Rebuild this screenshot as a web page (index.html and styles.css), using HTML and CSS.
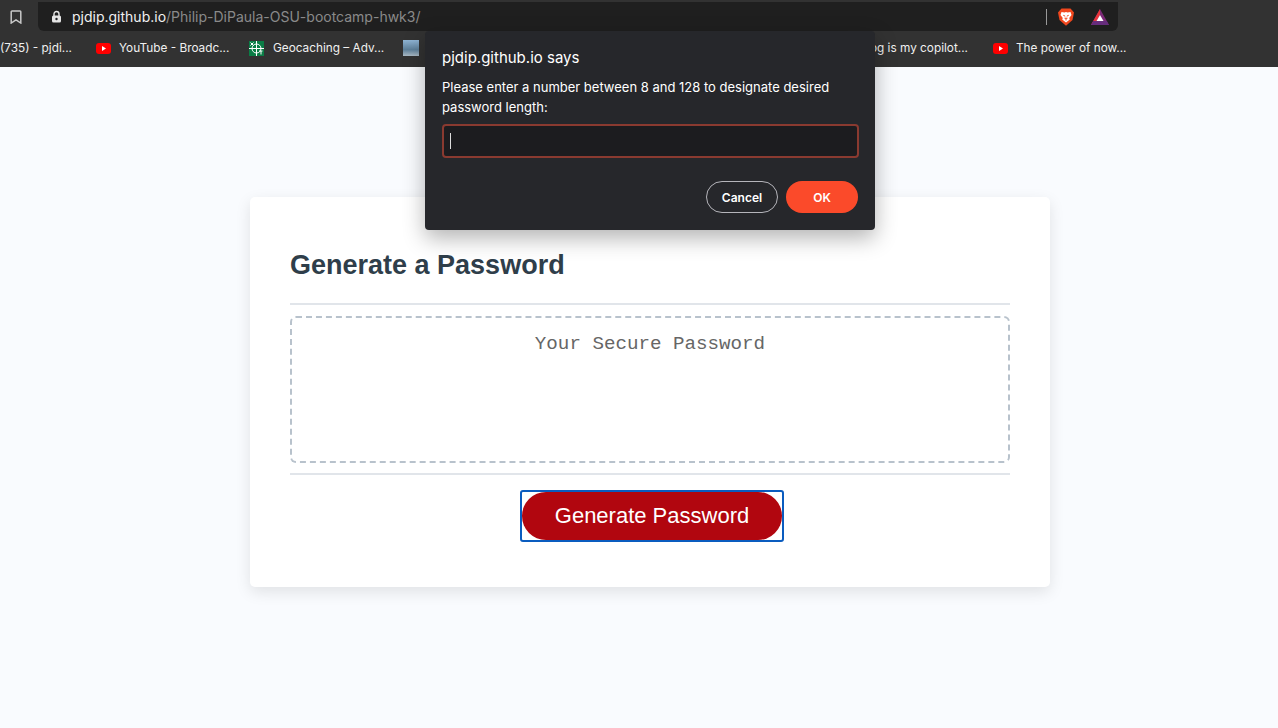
FILE: index.html
```html
<!DOCTYPE html>
<html lang="en">
<head>
  <meta charset="UTF-8" />
  <title>Password Generator</title>
  <link rel="stylesheet" href="styles.css">
</head>
<body>

  <header class="browser">
    <div class="toolbar">
      <svg class="bookmark-icon" width="12" height="14" viewBox="0 0 12 14"><path d="M2 1h8a.8.8 0 0 1 .8.8V13L6 9.800 1.200 13V1.800A.8.8 0 0 1 2 1z" fill="none" stroke="#c9c9c9" stroke-width="1.500"/></svg>
      <div class="address">
        <svg class="lock-icon" width="11" height="13" viewBox="0 0 11 13"><path d="M3 6V4a2.500 2.500 0 0 1 5 0v2" fill="none" stroke="#e4e4e4" stroke-width="1.400"/><rect x="1" y="5.500" width="9" height="7" rx="1.500" fill="#e4e4e4"/><circle cx="5.500" cy="9" r="1.200" fill="#202124"/></svg>
        <span class="host">pjdip.github.io</span><span class="path">/Philip-DiPaula-OSU-bootcamp-hwk3/</span>
        <div class="address-end">
          <span class="divider"></span>
          <svg width="16" height="18" viewBox="0 0 16 18"><path d="M3.500 .5h9l2 2.200L16 4.500l-1.500 7.500L8 17.800 1.500 12 0 4.500l1.500-1.800z" fill="#f1471d"/><path d="M3.500 4l3 .5L8 4l1.500.5 3-.5 1 3-2.300 3 .6 1.500L8 14.500l-3.800-3 .6-1.500-2.300-3z" fill="#fff"/><path d="M5.300 7.300l1.900.9M10.700 7.300l-1.900.9M8 10v2.500M6.500 10.200h3" stroke="#f1471d" stroke-width="1"/></svg>
          <svg width="18" height="16" viewBox="0 0 18 16"><polygon points="9,0 18,16 0,16" fill="#7c2a78"/><polygon points="9,0 4.500,8 0,16 5.500,12 9,6" fill="#e8343a"/><polygon points="9,6 12.500,12 5.500,12" fill="#fff"/><polygon points="0,16 18,16 15.800,12 2.200,12" fill="#662d7c"/></svg>
        </div>
      </div>
    </div>
    <nav class="bookmarks">
      <a class="mark first">(735) - pjdi...</a>
      <a class="mark yt">
        <svg class="yt-icon" width="15" height="11" viewBox="0 0 15 11"><rect width="15" height="11" rx="3" fill="#f00"/><polygon points="6,3 10,5.500 6,8" fill="#fff"/></svg>
        YouTube - Broadc...
      </a>
      <a class="mark geo">
        <svg width="15" height="15" viewBox="0 0 15 15"><rect width="15" height="15" fill="#0a7d46"/><circle cx="7.500" cy="7.500" r="4.500" fill="none" stroke="#fff" stroke-width="1"/><path d="M7.500 0v15M0 7.500h15M1.500 1.500l3 3M4.500 1.500l-3 3M10 10h3.500M12 10v3.500" stroke="#fff" stroke-width="1"/></svg>
        Geocaching – Adv...
      </a>
      <span class="thumb"></span>
      <a class="mark copilot">Blog is my copilot...</a>
      <a class="mark yt">
        <svg class="yt-icon" width="15" height="11" viewBox="0 0 15 11"><rect width="15" height="11" rx="3" fill="#f00"/><polygon points="6,3 10,5.500 6,8" fill="#fff"/></svg>
        The power of now...
      </a>
    </nav>
  </header>

  <main class="wrapper">
    <div class="card">
      <div class="card-header">
        <h2>Generate a Password</h2>
      </div>
      <div class="card-body">
        <textarea readonly placeholder="Your Secure Password"></textarea>
      </div>
      <div class="card-footer">
        <div class="focus-ring">
          <button class="btn">Generate Password</button>
        </div>
      </div>
    </div>
  </main>

  <div class="prompt">
    <h3>pjdip.github.io says</h3>
    <p>Please enter a number between 8 and 128 to designate desired password length:</p>
    <div class="prompt-input"><span class="caret"></span></div>
    <div class="button-group">
      <button class="cancel-btn">Cancel</button>
      <button class="ok-btn">OK</button>
    </div>
  </div>

</body>
</html>
```

FILE: styles.css
```css
* {
  box-sizing: border-box;
}

body {
  margin: 0;
  height: 728px;
  overflow: hidden;
  font-family: "Liberation Sans", Arial, sans-serif;
  background: #f9fbfe;
}

.browser {
  height: 67px;
  background: #323232;
  color: #fff;
  font-family: Inter, sans-serif;
}

.toolbar {
  height: 31px;
  display: flex;
  align-items: flex-end;
  padding-left: 10px;
}

.bookmark-icon {
  margin: 0 16px 7px 0;
}

.address {
  width: 1080px;
  height: 29px;
  background: #1f1f1f;
  border-radius: 0 0 6px 6px;
  display: flex;
  align-items: center;
  padding-left: 13px;
  font-size: 14px;
}

.lock-icon {
  margin-right: 10px;
}

.host {
  color: #f1f1f1;
}

.path {
  color: #8a8a8a;
}

.address-end {
  margin-left: auto;
  display: flex;
  align-items: center;
  gap: 17px;
  padding-right: 9px;
}

.divider {
  width: 1px;
  height: 16px;
  background: #999;
  margin-right: -6px;
}

.bookmarks {
  height: 34px;
  display: flex;
  align-items: center;
  font-size: 11.800px;
  white-space: nowrap;
}

.mark {
  display: flex;
  align-items: center;
  gap: 9px;
  color: #f0f0f0;
}

.first {
  width: 96px;
}

.yt {
  width: 153px;
  gap: 8px;
}

.geo {
  width: 154px;
}

.thumb {
  width: 16px;
  height: 16px;
  background: linear-gradient(#8fb4d4, #5d7f99 60%, #a9b9c4);
}

.copilot {
  margin-left: 429px;
  width: 145px;
  justify-content: flex-end;
  padding-right: 25px;
}

.wrapper {
  padding: 130px 0 0 250px;
}

.card {
  width: 800px;
  height: 390px;
  padding: 0 40px;
  background: #fff;
  border-radius: 5px;
  box-shadow: 0 5px 15px rgba(0, 0, 0, 0.1);
}

.card-header {
  height: 108px;
  padding-top: 51px;
  border-bottom: 2px solid #e1e5ea;
}

h2 {
  margin: 0;
  font-size: 27px;
  line-height: 34px;
  color: #2f3e4a;
}

.card-body {
  height: 170px;
  padding: 11px 0 10px;
  border-bottom: 2px solid #e1e5ea;
}

textarea {
  display: block;
  width: 100%;
  height: 147px;
  padding: 16px;
  border: 2px dashed #b8c2cc;
  border-radius: 6px;
  outline: none;
  resize: none;
  text-align: center;
  font-family: "Liberation Mono", monospace;
  font-size: 19.200px;
  line-height: 21px;
  background: #fff;
}

textarea::placeholder {
  color: #666;
}

.card-footer {
  display: flex;
  justify-content: center;
  padding: 15px 0 0 4px;
}

.focus-ring {
  border: 2px solid #0a5cbf;
  border-radius: 3px;
}

.btn {
  display: block;
  width: 260px;
  height: 48px;
  border: none;
  border-radius: 25px;
  background: #b1060f;
  color: #fff;
  font-family: "Liberation Sans", Arial, sans-serif;
  font-size: 22px;
  outline: none;
}

.prompt {
  position: absolute;
  top: 31px;
  left: 425px;
  width: 450px;
  height: 199px;
  padding: 18px 17px;
  background: #26272b;
  border-radius: 4px;
  color: #fff;
  font-family: Inter, sans-serif;
  box-shadow: 0 8px 22px rgba(0, 0, 0, 0.3);
}

h3 {
  margin: 0 0 10px;
  font-size: 15px;
  line-height: 18px;
  font-weight: 400;
}

.prompt p {
  margin: 0;
  font-size: 13px;
  line-height: 20px;
}

.prompt-input {
  width: 417px;
  height: 34px;
  margin-top: 7px;
  padding: 7px 6px;
  background: #1c1c1f;
  border: 2px solid #8a3a30;
  border-radius: 4px;
}

.caret {
  display: block;
  width: 1px;
  height: 16px;
  background: #ddd;
}

.button-group {
  display: flex;
  justify-content: flex-end;
  gap: 8px;
  margin-top: 23px;
}

.button-group button {
  height: 32px;
  border-radius: 16px;
  font-family: Inter, sans-serif;
  font-size: 12px;
  font-weight: 600;
  color: #fff;
}

.cancel-btn {
  width: 72px;
  background: transparent;
  border: 1px solid #b5b5bb;
}

.ok-btn {
  width: 72px;
  background: #fb4a2a;
  border: none;
}
```
